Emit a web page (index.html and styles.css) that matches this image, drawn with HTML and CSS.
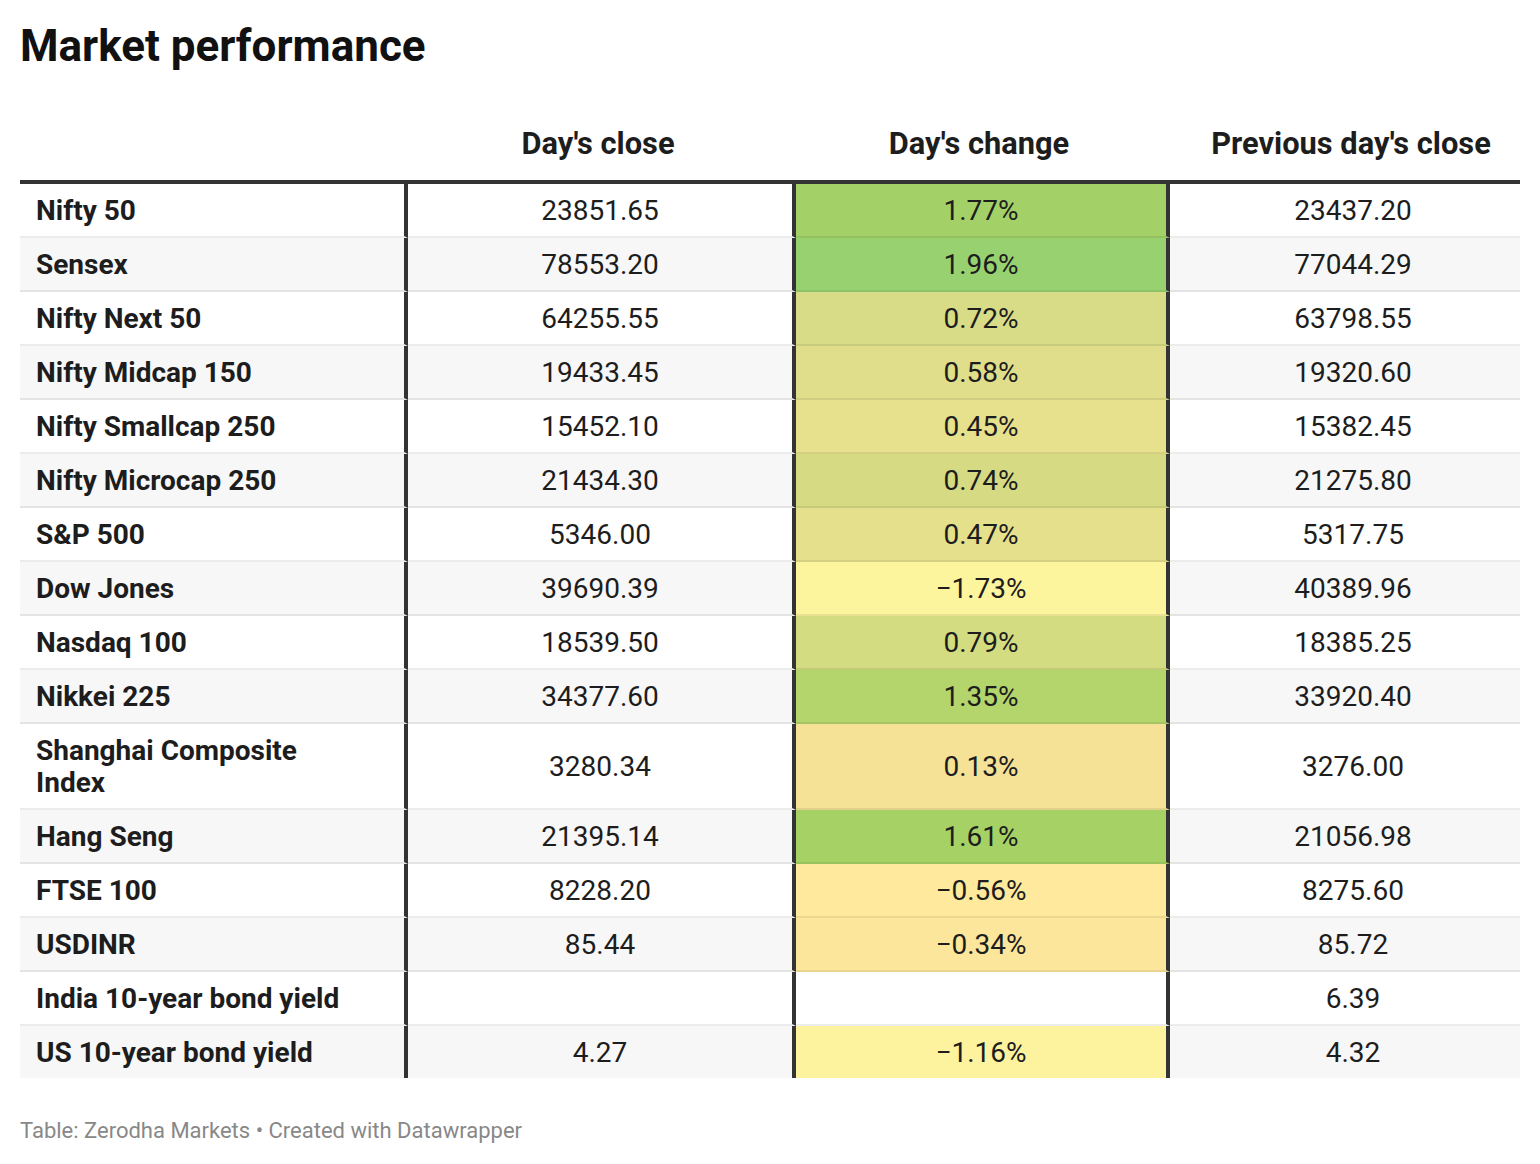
FILE: index.html
```html
<!DOCTYPE html>
<html lang="en">
<head>
<meta charset="utf-8">
<title>Market performance</title>
<link rel="stylesheet" href="styles.css">
</head>
<body>
<div class="chart">
  <h1 class="title">Market performance</h1>
  <table class="tbl">
    <thead>
      <tr>
        <th class="c1"></th>
        <th class="c2">Day's close</th>
        <th class="c3">Day's change</th>
        <th class="c4">Previous day's close</th>
      </tr>
    </thead>
    <tbody>
      <tr><td class="c1"><span class="lbl">Nifty 50</span></td><td class="c2">23851.65</td><td class="c3" style="background:#a3d168">1.77%</td><td class="c4">23437.20</td></tr>
      <tr><td class="c1"><span class="lbl">Sensex</span></td><td class="c2">78553.20</td><td class="c3" style="background:#98d270">1.96%</td><td class="c4">77044.29</td></tr>
      <tr><td class="c1"><span class="lbl">Nifty Next 50</span></td><td class="c2">64255.55</td><td class="c3" style="background:#d8dc86">0.72%</td><td class="c4">63798.55</td></tr>
      <tr><td class="c1"><span class="lbl">Nifty Midcap 150</span></td><td class="c2">19433.45</td><td class="c3" style="background:#e0de8a">0.58%</td><td class="c4">19320.60</td></tr>
      <tr><td class="c1"><span class="lbl">Nifty Smallcap 250</span></td><td class="c2">15452.10</td><td class="c3" style="background:#e7e08d">0.45%</td><td class="c4">15382.45</td></tr>
      <tr><td class="c1"><span class="lbl">Nifty Microcap 250</span></td><td class="c2">21434.30</td><td class="c3" style="background:#d6db83">0.74%</td><td class="c4">21275.80</td></tr>
      <tr><td class="c1"><span class="lbl">S&amp;P 500</span></td><td class="c2">5346.00</td><td class="c3" style="background:#e5e08c">0.47%</td><td class="c4">5317.75</td></tr>
      <tr><td class="c1"><span class="lbl">Dow Jones</span></td><td class="c2">39690.39</td><td class="c3" style="background:#fdf59e">−1.73%</td><td class="c4">40389.96</td></tr>
      <tr><td class="c1"><span class="lbl">Nasdaq 100</span></td><td class="c2">18539.50</td><td class="c3" style="background:#d3dc81">0.79%</td><td class="c4">18385.25</td></tr>
      <tr><td class="c1"><span class="lbl">Nikkei 225</span></td><td class="c2">34377.60</td><td class="c3" style="background:#b4d46c">1.35%</td><td class="c4">33920.40</td></tr>
      <tr><td class="c1"><span class="lbl">Shanghai Composite Index</span></td><td class="c2">3280.34</td><td class="c3" style="background:#f5e296">0.13%</td><td class="c4">3276.00</td></tr>
      <tr><td class="c1"><span class="lbl">Hang Seng</span></td><td class="c2">21395.14</td><td class="c3" style="background:#a6d265">1.61%</td><td class="c4">21056.98</td></tr>
      <tr><td class="c1"><span class="lbl">FTSE 100</span></td><td class="c2">8228.20</td><td class="c3" style="background:#fee99c">−0.56%</td><td class="c4">8275.60</td></tr>
      <tr><td class="c1"><span class="lbl">USDINR</span></td><td class="c2">85.44</td><td class="c3" style="background:#fce69b">−0.34%</td><td class="c4">85.72</td></tr>
      <tr><td class="c1"><span class="lbl">India 10-year bond yield</span></td><td class="c2"></td><td class="c3" style="background:#ffffff"></td><td class="c4">6.39</td></tr>
      <tr><td class="c1"><span class="lbl">US 10-year bond yield</span></td><td class="c2">4.27</td><td class="c3" style="background:#fdf29e">−1.16%</td><td class="c4">4.32</td></tr>
    </tbody>
  </table>
  <div class="footer">Table: Zerodha Markets • Created with Datawrapper</div>
</div>
</body>
</html>
```
FILE: styles.css
```css
html, body {
  margin: 0;
  padding: 0;
  background: #ffffff;
}

body {
  font-family: Roboto, "Liberation Sans", Arial, sans-serif;
  color: #1d1d1d;
}

.chart {
  padding: 20px 20px 0 20px;
}

.title {
  margin: 0 0 46px 0;
  font-size: 44px;
  font-weight: 700;
  line-height: normal;
  color: #111111;
}

.tbl {
  border-collapse: separate;
  border-spacing: 0;
  width: 1500px;
  table-layout: fixed;
  font-size: 28px;
  line-height: 32px;
}

.tbl th,
.tbl td {
  box-sizing: border-box;
}

.tbl th {
  font-size: 30.8px;
  font-weight: 700;
  padding: 10px 20px 20px 12px;
  border-bottom: 4px solid #333333;
  text-align: center;
  vertical-align: bottom;
}

.tbl td {
  padding: 11px 16px 9px 16px;
  border-bottom: 2px solid rgba(0, 0, 0, 0.075);
  text-align: center;
  vertical-align: middle;
  font-weight: 400;
}

.tbl tbody tr:nth-child(even) td {
  background: #f7f7f7;
}

.tbl tbody tr:last-child td {
  border-bottom: 0;
}

.tbl .c1 {
  width: 388px;
  text-align: left;
}

.tbl td.c1 {
  font-weight: 700;
  border-right: 4px solid #333333;
}

.lbl {
  display: inline-block;
  max-width: 312px;
}

.tbl .c2 {
  width: 388px;
}

.tbl td.c2 {
  border-right: 4px solid #333333;
}

.tbl .c3 {
  width: 374px;
}

.tbl td.c3 {
  border-right: 4px solid #333333;
}

.tbl .c4 {
  width: 350px;
  padding-right: 0;
}

.footer {
  margin-top: 40px;
  font-size: 22px;
  line-height: normal;
  color: #888888;
}
```
